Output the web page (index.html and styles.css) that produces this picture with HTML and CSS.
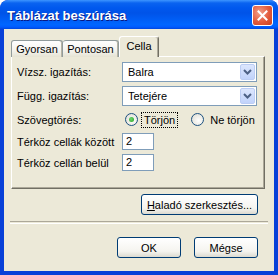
FILE: index.html
```html
<!DOCTYPE html>
<html lang="hu">
<head>
    <meta charset="UTF-8">
    <title>Táblázat beszúrása</title>
    <link rel="stylesheet" href="styles.css">
</head>
<body>
    <div class="window">
        <!-- Címsor -->
        <div class="titlebar">
            <span class="title">Táblázat beszúrása</span>
            <span class="close">
                <svg width="11" height="11" viewBox="0 0 11 11"><path d="M1.5 1.5 L9.5 9.5 M9.5 1.5 L1.5 9.5" stroke="#fff" stroke-width="2" stroke-linecap="square"/></svg>
            </span>
        </div>

        <div class="content">
            <!-- Fülek -->
            <div class="tabs">
                <span class="tab">Gyorsan</span>
                <span class="tab">Pontosan</span>
                <span class="tab active">Cella</span>
            </div>

            <div class="panel">
                <div class="form">
                    <span class="label">Vízsz. igazítás:</span>
                    <div class="select">
                        <span class="value">Balra</span>
                        <span class="drop"><svg width="9" height="6" viewBox="0 0 9 6"><path d="M1 1 L4.5 4.5 L8 1" fill="none" stroke="#4d6185" stroke-width="2"/></svg></span>
                    </div>

                    <span class="label">Függ. igazítás:</span>
                    <div class="select">
                        <span class="value">Tetejére</span>
                        <span class="drop"><svg width="9" height="6" viewBox="0 0 9 6"><path d="M1 1 L4.5 4.5 L8 1" fill="none" stroke="#4d6185" stroke-width="2"/></svg></span>
                    </div>

                    <span class="label">Szövegtörés:</span>
                    <div class="radios">
                        <span class="radio checked"></span>
                        <span class="radio-text focus">Törjön</span>
                        <span class="radio"></span>
                        <span class="radio-text">Ne törjön</span>
                    </div>

                    <span class="label">Térköz cellák között</span>
                    <div class="input">2</div>

                    <span class="label">Térköz cellán belül</span>
                    <div class="input">2</div>
                </div>
            </div>

            <div class="advanced">
                <button class="btn btn-wide"><u>H</u>aladó szerkesztés...</button>
            </div>

            <div class="separator"></div>

            <div class="actions">
                <button class="btn">OK</button>
                <button class="btn">Mégse</button>
            </div>
        </div>
    </div>
</body>
</html>
```

FILE: styles.css
```css
/* Alap */
body {
    margin: 0;
    font-family: 'Liberation Sans', Arial, sans-serif;
    font-size: 11px;
    color: #000;
}

.window {
    width: 278px;
    height: 275px;
    box-sizing: border-box;
    background: #0840d8;
    border-radius: 8px 8px 0 0;
    display: flex;
    flex-direction: column;
    overflow: hidden;
}

/* Címsor */
.titlebar {
    height: 29px;
    flex: none;
    display: flex;
    align-items: center;
    justify-content: space-between;
    padding: 0 5px 0 7px;
    background: linear-gradient(#3d95ff 0, #0a63f0 3px, #0058ee 8px, #0053e8 45%, #0066ff 85%, #005bff 93%, #0046dc 100%);
    border-radius: 8px 8px 0 0;
}

.title {
    color: #fff;
    font-weight: bold;
    font-size: 13px;
    text-shadow: 1px 1px #0a1883;
    margin-top: 2px;
}

.close {
    width: 19px;
    height: 19px;
    border: 1px solid #fff;
    border-radius: 3px;
    background: radial-gradient(circle at 35% 35%, #f0a08c, #e35a3c 55%, #c9401f);
    display: flex;
    align-items: center;
    justify-content: center;
    margin-top: 1px;
}

/* Tartalom */
.content {
    flex: 1;
    margin: 0 4px 4px;
    background: #ece9d8;
    display: flex;
    flex-direction: column;
}

.tabs {
    display: flex;
    align-items: flex-end;
    height: 20px;
    margin: 8px 0 0 7px;
    position: relative;
    z-index: 1;
}

.tab {
    height: 16px;
    box-sizing: content-box;
    border: 1px solid #919b9c;
    border-bottom: none;
    border-radius: 3px 3px 0 0;
    background: linear-gradient(#fefefe, #f4f3ee 60%, #e6e3d3);
    display: flex;
    align-items: center;
    justify-content: center;
    box-shadow: inset -1px 0 #b7b4a4;
}

.tab:nth-child(1) { width: 50px; }
.tab:nth-child(2) { width: 55px; border-left: none; }

.tab.active {
    width: 38px;
    height: 20px;
    display: block;
    line-height: 19px;
    text-align: center;
    background: #ece9d8;
    border-color: #fff #716f64 #ece9d8 #fff;
    box-shadow: inset -1px 0 #aca899;
}

/* Panel */
.panel {
    width: 254px;
    height: 133px;
    box-sizing: border-box;
    margin-left: 7px;
    margin-top: -1px;
    border: 1px solid;
    border-color: #fff #716f64 #716f64 #fff;
    box-shadow: inset -1px -1px #aca899;
    padding: 5px 0 0 5px;
}

.form {
    display: grid;
    grid-template-columns: 105px 135px;
    grid-template-rows: 20px 20px 19px 17px 17px;
    row-gap: 4px;
    align-items: center;
}

.select {
    height: 20px;
    box-sizing: border-box;
    border: 1px solid #7f9db9;
    background: #fff;
    display: flex;
    align-items: center;
    justify-content: space-between;
    padding: 1px;
}

.value {
    padding-left: 4px;
}

.drop {
    width: 15px;
    height: 16px;
    border-radius: 2px;
    background: linear-gradient(#dce6fd, #c1d3fb);
    border: 1px solid #bccdf4;
    box-sizing: border-box;
    display: flex;
    align-items: center;
    justify-content: center;
}

.radios {
    display: flex;
    align-items: center;
    height: 19px;
    padding-left: 3px;
    white-space: nowrap;
    width: max-content;
}

.radio {
    flex: none;
    width: 11px;
    height: 11px;
    border: 1px solid #1c5180;
    border-radius: 50%;
    background: radial-gradient(circle at 60% 60%, #fff, #dcd9cd);
    position: relative;
}

.radio.checked::after {
    content: '';
    position: absolute;
    left: 3px;
    top: 3px;
    width: 5px;
    height: 5px;
    border-radius: 50%;
    background: radial-gradient(circle at 40% 40%, #70d66f, #21a121);
}

.radio-text {
    margin-left: 4px;
    padding: 1px 2px;
    margin-right: 14px;
}

.radio-text.focus {
    outline: 1px dotted #000;
}

.input {
    width: 32px;
    height: 17px;
    box-sizing: border-box;
    border: 1px solid #7f9db9;
    background: #fff;
    padding-left: 3px;
    line-height: 15px;
}

/* Gombok */
.advanced {
    display: flex;
    justify-content: flex-end;
    margin: 5px 16px 0 0;
}

.btn {
    height: 21px;
    width: 64px;
    box-sizing: border-box;
    border: 1px solid #003c74;
    border-radius: 3px;
    background: linear-gradient(#fff, #f5f4ef 70%, #dcdad0);
    font-family: inherit;
    font-size: 11px;
    color: #000;
    padding: 0;
}

.btn-wide {
    width: 117px;
}

.separator {
    margin: 6px 6px 0;
    height: 1px;
    border-top: 1px solid #aca899;
    border-bottom: 1px solid #fff;
}

.actions {
    display: flex;
    justify-content: flex-end;
    gap: 13px;
    margin: 13px 16px 0 0;
}
```
